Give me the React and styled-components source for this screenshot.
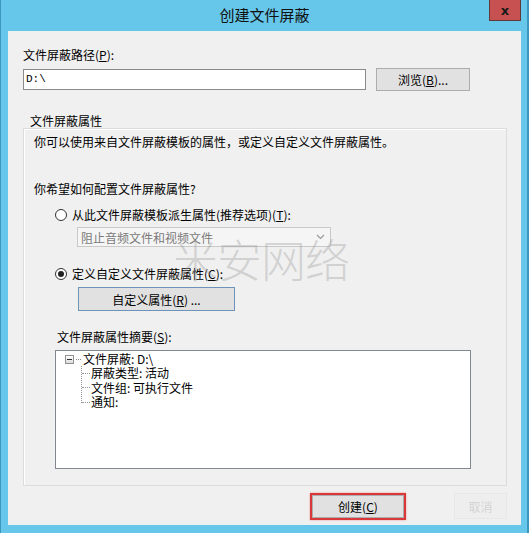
import React from 'react'
import styled, { createGlobalStyle } from 'styled-components'

const GlobalStyle = createGlobalStyle`
  html, body { margin: 0; padding: 0; background: #fff; }
  body { font-family: "Noto Sans CJK SC", "Noto Sans", sans-serif; font-size: 12px; color: #000; }
`

const Window = styled.div`
  position: relative;
  width: 529px;
  height: 533px;
  box-sizing: border-box;
  background: #66c7ea;
  border-left: 1px solid #3c96bd;
  border-right: 2px solid #3c96bd;
  padding: 0 6px 8px 7px;
  display: flex;
  flex-direction: column;
  overflow: hidden;
`

const TitleBar = styled.div`
  height: 31px;
  display: grid;
  grid-template-columns: 1fr auto 1fr;
  align-items: start;
`

const Title = styled.div`
  grid-column: 2;
  margin-top: 5px;
  font-size: 15px;
  line-height: 20px;
  color: #111;
`

const CloseButton = styled.div`
  grid-column: 3;
  justify-self: end;
  width: 32px;
  height: 21px;
  box-sizing: border-box;
  background: #c75050;
  border: 1px solid #5a3a3a;
  border-top: none;
  display: flex;
  align-items: center;
  justify-content: center;
  color: #1a1a1a;
  font-family: "DejaVu Sans", sans-serif;
  font-weight: bold;
  font-size: 13px;
`

const Client = styled.div`
  flex: 1;
  background: #f0f0f0;
  padding: 17px 14px 0 15px;
  display: flex;
  flex-direction: column;
`

const Label = styled.div`
  line-height: 14px;
  height: 14px;
  white-space: nowrap;
  margin: ${p => p.$m || '0'};
`

const Key = styled.span`
  text-decoration: underline;
`

const PathRow = styled.div`
  display: flex;
  align-items: center;
  gap: 10px;
  margin-top: 6px;
`

const TextInput = styled.div`
  width: 343px;
  height: 21px;
  box-sizing: border-box;
  border: 1px solid #8a8a8a;
  background: #fff;
  padding: 2px 2px;
  line-height: 15px;
  font-family: "Liberation Mono", "Noto Sans CJK SC", monospace;
  font-size: 11px;
`

const Button = styled.div`
  width: ${p => p.$w}px;
  height: ${p => p.$h || 23}px;
  box-sizing: border-box;
  background: #e1e1e1;
  border: 1px solid ${p => p.$border || '#adadad'};
  display: flex;
  align-items: center;
  justify-content: center;
  white-space: nowrap;
  opacity: ${p => p.$faint ? 0.12 : 1};
  margin: ${p => p.$m || '0'};
`

const GroupLabel = styled.div`
  margin: 23px 0 0 7px;
  line-height: 14px;
`

const GroupBox = styled.div`
  height: 358px;
  width: 484px;
  box-sizing: border-box;
  border: 1px solid #dcdcdc;
  box-shadow: inset 1px 1px 0 #fff;
  padding: 6px 0 0 10px;
  display: flex;
  flex-direction: column;
`

const RadioRow = styled.div`
  display: flex;
  align-items: center;
  gap: 5px;
  margin: ${p => p.$m};
  padding-left: 21px;
`

const Radio = styled.span`
  width: 12px;
  height: 12px;
  box-sizing: border-box;
  border-radius: 50%;
  border: 1px solid #333;
  background: #fff;
  display: flex;
  align-items: center;
  justify-content: center;
  &::after {
    content: '';
    width: 6px;
    height: 6px;
    border-radius: 50%;
    background: ${p => (p.$checked ? '#222' : 'transparent')};
  }
`

const Select = styled.div`
  margin: 4px 0 0 43px;
  width: 254px;
  height: 20px;
  box-sizing: border-box;
  border: 1px solid #c9c9c9;
  background: #f5f5f5;
  color: #7a7a7a;
  display: flex;
  align-items: center;
  justify-content: space-between;
  padding: 0 5px 0 3px;
`

const Chevron = styled.svg`
  width: 9px;
  height: 6px;
`

const TreeBox = styled.div`
  margin: 6px 0 0 21px;
  width: 416px;
  height: 119px;
  box-sizing: border-box;
  border: 1px solid #828790;
  background: #fff;
  padding: 1px 0 0 9px;
`

const TreeRoot = styled.div`
  display: flex;
  align-items: center;
  height: 14px;
  line-height: 14px;
`

const Expander = styled.span`
  width: 9px;
  height: 9px;
  box-sizing: border-box;
  border: 1px solid #919191;
  background: linear-gradient(#fff, #ddd);
  position: relative;
  margin-right: 2px;
  &::after {
    content: '';
    position: absolute;
    left: 1px;
    top: 3px;
    width: 5px;
    height: 1px;
    background: #333;
  }
`

const Dots = styled.span`
  width: 5px;
  border-top: 1px dotted #888;
  margin-right: 2px;
`

const Children = styled.div`
  margin-left: 16px;
  border-left: 1px dotted #999;
  height: 37px;
`

const TreeChild = styled.div`
  display: flex;
  align-items: center;
  height: 14.5px;
  line-height: 14px;
  &::before {
    content: '';
    width: 8px;
    border-top: 1px dotted #999;
    margin-right: 1px;
  }
`

const Footer = styled.div`
  display: flex;
  gap: 48px;
  margin: 7px 0 0 287px;
`

const Annotated = styled.div`
  border: 2px solid #d9383a;
  box-shadow: 0 0 2px #e99;
`

const Watermark = styled.div`
  position: absolute;
  left: 172px;
  top: 226px;
  font-size: 45px;
  font-weight: 300;
  letter-spacing: -1px;
  color: rgba(150, 150, 150, 0.35);
  pointer-events: none;
  font-family: "Noto Sans CJK SC", sans-serif;
`

export default function App() {
  return (
    <>
      <GlobalStyle />
      <Window>
        <TitleBar>
          <Title>创建文件屏蔽</Title>
          <CloseButton>x</CloseButton>
        </TitleBar>
        <Client>
          <Label>文件屏蔽路径(<Key>P</Key>):</Label>
          <PathRow>
            <TextInput>D:\</TextInput>
            <Button $w={94} $h={23}>浏览(<Key>B</Key>)...</Button>
          </PathRow>
          <GroupLabel>文件屏蔽属性</GroupLabel>
          <GroupBox>
            <Label>你可以使用来自文件屏蔽模板的属性，或定义自定义文件屏蔽属性。</Label>
            <Label $m="33px 0 0 0">你希望如何配置文件屏蔽属性?</Label>
            <RadioRow $m="10px 0 0 0">
              <Radio />
              <span>从此文件屏蔽模板派生属性(推荐选项)(<Key>T</Key>):</span>
            </RadioRow>
            <Select>
              <span>阻止音频文件和视频文件</span>
              <Chevron viewBox="0 0 9 6">
                <path d="M1 1 L4.5 4.5 L8 1" fill="none" stroke="#9a9a9a" strokeWidth="1.2" />
              </Chevron>
            </Select>
            <RadioRow $m="18px 0 0 0">
              <Radio $checked />
              <span>定义自定义文件屏蔽属性(<Key>C</Key>):</span>
            </RadioRow>
            <Button $w={157} $h={24} $border="#6f93b8" $m="5px 0 0 44px">
              自定义属性(<Key>R</Key>) ...
            </Button>
            <Label $m="19px 0 0 23px">文件屏蔽属性摘要(<Key>S</Key>):</Label>
            <TreeBox>
              <TreeRoot>
                <Expander />
                <Dots />
                文件屏蔽: D:\
              </TreeRoot>
              <Children>
                <TreeChild>屏蔽类型: 活动</TreeChild>
                <TreeChild>文件组: 可执行文件</TreeChild>
                <TreeChild>通知:</TreeChild>
              </Children>
            </TreeBox>
          </GroupBox>
          <Footer>
            <Annotated>
              <Button $w={92} $h={23}>创建(<Key>C</Key>)</Button>
            </Annotated>
            <Button $w={56} $h={26} $faint>取消</Button>
          </Footer>
        </Client>
        <Watermark>米安网络</Watermark>
      </Window>
    </>
  )
}
